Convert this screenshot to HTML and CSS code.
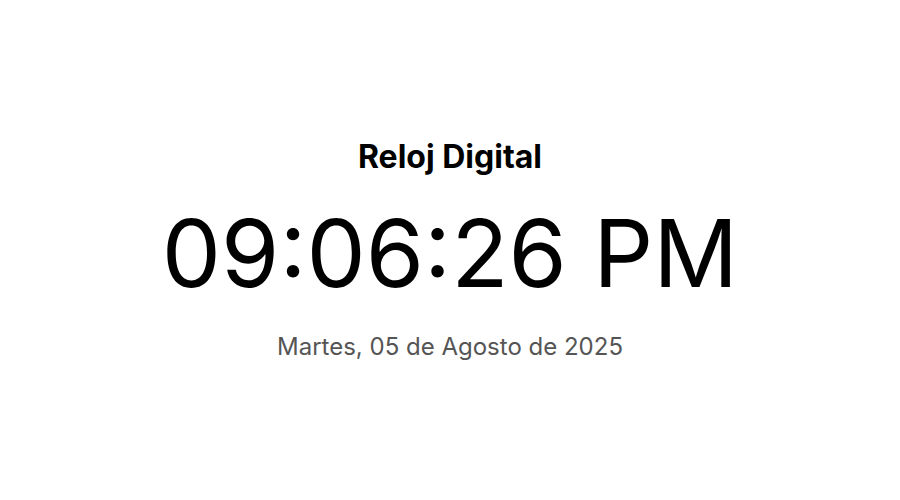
FILE: index.html
```html
<!DOCTYPE html>
<html lang="es">
<head>
<meta charset="utf-8">
<title>Reloj Digital</title>
<link rel="stylesheet" href="styles.css">
</head>
<body>
<main class="clock">
  <h1 class="clock-title">Reloj Digital</h1>
  <div class="clock-time">09:06:26 PM</div>
  <div class="clock-date">Martes, 05 de Agosto de 2025</div>
</main>
</body>
</html>
```

FILE: styles.css
```css
html, body {
  margin: 0;
  padding: 0;
  background: #ffffff;
}
body {
  font-family: Inter, "Noto Sans", sans-serif;
  color: #000;
}
.clock {
  height: 100vh;
  display: flex;
  flex-direction: column;
  align-items: center;
  justify-content: center;
}
.clock-title {
  margin: 0;
  font-size: 32px;
  font-weight: 700;
  line-height: 40px;
}
.clock-time {
  margin-top: 21px;
  font-size: 94px;
  font-weight: 400;
  line-height: 110px;
}
.clock-date {
  margin-top: 23px;
  font-size: 24px;
  color: #555;
  line-height: 32px;
}
```
